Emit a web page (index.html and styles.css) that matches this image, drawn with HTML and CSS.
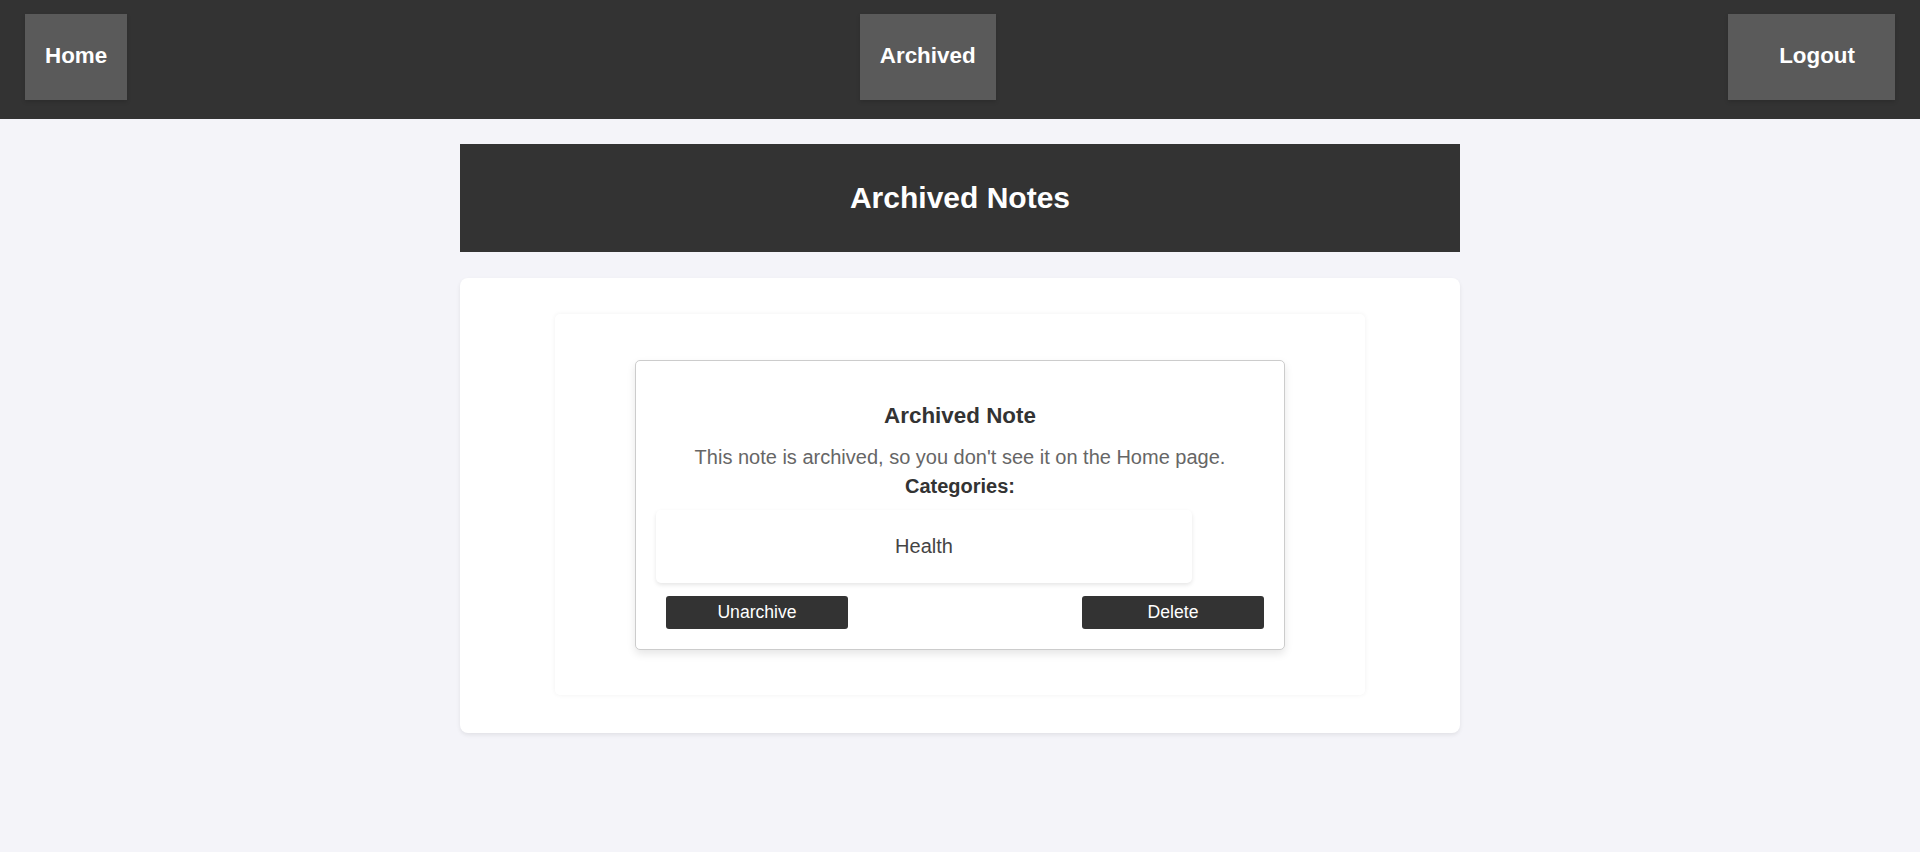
FILE: index.html
```html
<!DOCTYPE html>
<html lang="en">
<head>
<meta charset="utf-8">
<title>Archived Notes</title>
<link rel="stylesheet" href="styles.css">
</head>
<body>
  <nav class="navbar">
    <a class="nav-btn" href="#">Home</a>
    <a class="nav-btn" href="#">Archived</a>
    <a class="nav-btn nav-logout" href="#">Logout</a>
  </nav>
  <main class="page">
    <header class="page-header">
      <h1 class="page-title">Archived Notes</h1>
    </header>
    <section class="card">
      <div class="notes-list">
        <article class="note">
          <h3 class="note-title">Archived Note</h3>
          <p class="note-desc">This note is archived, so you don't see it on the Home page.</p>
          <div class="note-cat-label">Categories:</div>
          <div class="cat-item">Health</div>
          <div class="note-actions">
            <button class="btn">Unarchive</button>
            <button class="btn">Delete</button>
          </div>
        </article>
      </div>
    </section>
  </main>
</body>
</html>
```

FILE: styles.css
```css
* { box-sizing: border-box; }

html, body {
  margin: 0;
  padding: 0;
}

body {
  background: #f4f4f9;
  font-family: "Liberation Sans", Arial, sans-serif;
  color: #333;
  min-height: 852px;
}

.navbar {
  background: #333333;
  display: flex;
  justify-content: space-between;
  align-items: flex-start;
  padding: 14px 25px 19px;
}

.nav-btn {
  display: block;
  background: #5a5a5a;
  color: #ffffff;
  text-decoration: none;
  font-weight: bold;
  font-size: 22.4px;
  line-height: 26px;
  padding: 29px 20px 31px;
  box-shadow: 0 2px 4px rgba(0, 0, 0, 0.15);
}

.nav-logout {
  padding-left: 51px;
  padding-right: 40px;
}

.page {
  width: 1000px;
  margin: 25px auto 0;
}

.page-header {
  background: #333333;
  padding: 37px 20px;
  text-align: center;
}

.page-title {
  margin: 0;
  color: #ffffff;
  font-size: 30px;
  line-height: 34px;
  font-weight: bold;
}

.card {
  margin-top: 26px;
  background: #ffffff;
  border-radius: 8px;
  box-shadow: 0 2px 4px rgba(0, 0, 0, 0.08);
  padding: 36px 95px 38px;
}

.notes-list {
  background: #ffffff;
  border-radius: 5px;
  box-shadow: 0 0 5px rgba(0, 0, 0, 0.06);
  padding: 46px 80px 45px;
}

.note {
  background: #ffffff;
  border: 1px solid #cccccc;
  border-radius: 5px;
  box-shadow: 0 4px 8px rgba(0, 0, 0, 0.1);
  padding: 20px 20px 20px;
  text-align: center;
}

.note-title {
  margin: 22px 0 17px;
  font-size: 22.4px;
  line-height: 26px;
  font-weight: bold;
  color: #333;
}

.note-desc {
  margin: 0;
  font-size: 20px;
  line-height: 23px;
  color: #666666;
}

.note-cat-label {
  margin-top: 6px;
  font-size: 20px;
  line-height: 23px;
  font-weight: bold;
  color: #333;
}

.cat-item {
  margin-top: 12px;
  width: 536px;
  background: #ffffff;
  border-radius: 5px;
  box-shadow: 0 2px 4px rgba(0, 0, 0, 0.1);
  padding: 25px 10px;
  font-size: 20px;
  line-height: 23px;
  color: #444444;
}

.note-actions {
  margin-top: 13px;
  display: flex;
  justify-content: space-between;
  padding-left: 10px;
}

.btn {
  width: 182px;
  height: 33px;
  background: #333333;
  color: #ffffff;
  border: none;
  border-radius: 3px;
  font-family: "Liberation Sans", Arial, sans-serif;
  font-size: 17.6px;
  line-height: 21px;
  padding: 0;
  cursor: pointer;
}
```
